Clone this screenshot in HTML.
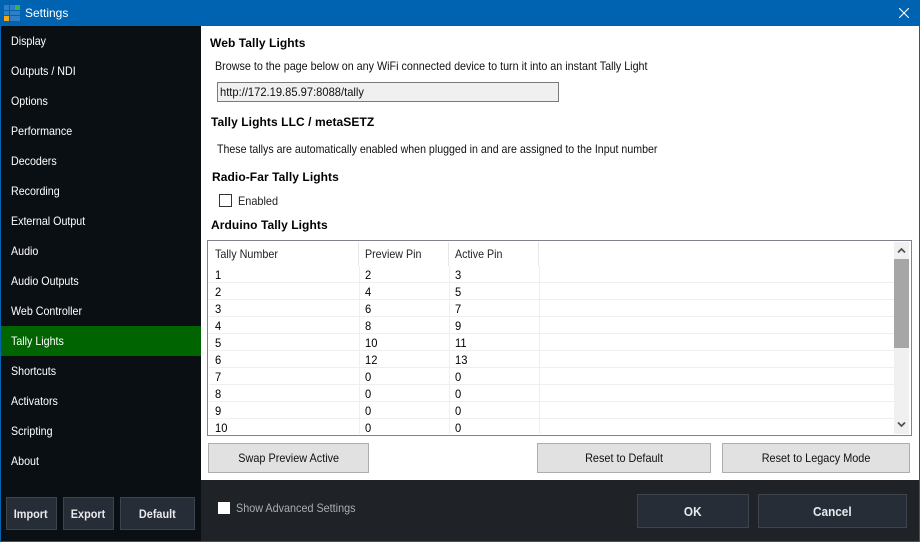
<!DOCTYPE html>
<html>
<head>
<meta charset="utf-8">
<style>
html,body{margin:0;padding:0}
body{width:920px;height:542px;position:relative;overflow:hidden;background:#0063b1;font-family:"Liberation Sans",sans-serif;font-size:12px;color:#000}
div{position:absolute;box-sizing:border-box}
.t{white-space:nowrap;line-height:14px;height:14px;transform:scaleX(.89);transform-origin:0 50%}
.n{color:#fff;left:11px}
.h{font-weight:bold;letter-spacing:.08px;font-size:12px;transform:none}
.b{background:#e1e1e1;border:1px solid #adadad;height:30px;line-height:28px;text-align:center;color:#111;white-space:nowrap}
.b span,.d span{display:inline-block;transform:scaleX(.905)}
.d{background:#262d36;border:1px solid #3c444e;color:#e8eaee;font-weight:bold;text-align:center;white-space:nowrap;font-size:12px}
.l{background:#efefef;height:1px;left:209px;width:685px}
.v{background:#efefef;width:1px;top:242px;height:192px}
.hv{background:#e6e6e6;width:1px;top:242px;height:24px}
.r{transform:scaleX(.93)}
</style>
</head>
<body>
<div style="left:1px;top:26px;width:200px;height:515px;background:#0a0f14"></div>
<div style="left:201px;top:26px;width:718px;height:454px;background:#fff"></div>
<div style="left:201px;top:480px;width:718px;height:61px;background:#1f2328"></div>

<!-- title -->
<div style="left:4px;top:5px;width:5px;height:5px;background:#2f7fc4"></div>
<div style="left:10px;top:5px;width:5px;height:5px;background:#2f7fc4"></div>
<div style="left:15px;top:5px;width:5px;height:5px;background:#3cb043"></div>
<div style="left:4px;top:11px;width:5px;height:4px;background:#2f7fc4"></div>
<div style="left:10px;top:11px;width:5px;height:4px;background:#2f7fc4"></div>
<div style="left:15px;top:11px;width:5px;height:4px;background:#2f7fc4"></div>
<div style="left:4px;top:16px;width:5px;height:5px;background:#f6a81c"></div>
<div style="left:10px;top:16px;width:5px;height:5px;background:#2f7fc4"></div>
<div style="left:15px;top:16px;width:5px;height:5px;background:#2f7fc4"></div>
<div class="t" style="left:25px;top:6px;color:#fff;transform:none">Settings</div>
<svg style="position:absolute;left:899px;top:8px" width="10" height="10" viewBox="0 0 10 10"><path d="M0 0l10 10M10 0L0 10" stroke="#fff" stroke-width="1.1" fill="none"/></svg>

<!-- sidebar -->
<div style="left:1px;top:326px;width:200px;height:30px;background:#006400"></div>
<div class="t n" style="top:34px">Display</div>
<div class="t n" style="top:64px">Outputs / NDI</div>
<div class="t n" style="top:94px">Options</div>
<div class="t n" style="top:124px">Performance</div>
<div class="t n" style="top:154px">Decoders</div>
<div class="t n" style="top:184px">Recording</div>
<div class="t n" style="top:214px">External Output</div>
<div class="t n" style="top:244px">Audio</div>
<div class="t n" style="top:274px">Audio Outputs</div>
<div class="t n" style="top:304px">Web Controller</div>
<div class="t n" style="top:334px">Tally Lights</div>
<div class="t n" style="top:364px">Shortcuts</div>
<div class="t n" style="top:394px">Activators</div>
<div class="t n" style="top:424px">Scripting</div>
<div class="t n" style="top:454px">About</div>

<div class="d" style="left:6px;top:497px;width:51px;height:33px;line-height:32px;padding-right:1px"><span>Import</span></div>
<div class="d" style="left:63px;top:497px;width:51px;height:33px;line-height:32px"><span>Export</span></div>
<div class="d" style="left:120px;top:497px;width:75px;height:33px;line-height:32px"><span>Default</span></div>

<!-- content -->
<div class="t h" style="left:210px;top:36px">Web Tally Lights</div>
<div class="t" style="left:215px;top:59px;color:#111;transform:scaleX(.896)">Browse to the page below on any WiFi connected device to turn it into an instant Tally Light</div>
<div style="left:217px;top:82px;width:342px;height:20px;background:#f0f0f0;border:1px solid #7a7a7a"></div>
<div class="t" style="left:220px;top:85px;color:#111;transform:scaleX(.93)">http://172.19.85.97:8088/tally</div>
<div class="t h" style="left:211px;top:115px">Tally Lights LLC / metaSETZ</div>
<div class="t" style="left:217px;top:142px;color:#111;transform:scaleX(.885)">These tallys are automatically enabled when plugged in and are assigned to the Input number</div>
<div class="t h" style="left:212px;top:170px">Radio-Far Tally Lights</div>
<div style="left:219px;top:194px;width:13px;height:13px;background:#fff;border:1px solid #333"></div>
<div class="t" style="left:238px;top:194px;color:#222;transform:scaleX(.91)">Enabled</div>
<div class="t h" style="left:211px;top:218px">Arduino Tally Lights</div>

<!-- table -->
<div style="left:207px;top:240px;width:705px;height:196px;border:1px solid #82828c;background:#fff"></div>
<div class="hv" style="left:358px"></div>
<div class="hv" style="left:448px"></div>
<div class="hv" style="left:538px"></div>
<div class="v" style="left:359px;top:266px;height:168px"></div>
<div class="v" style="left:449px;top:266px;height:168px"></div>
<div class="v" style="left:539px;top:266px;height:168px"></div>
<div class="l" style="top:282px"></div>
<div class="l" style="top:299px"></div>
<div class="l" style="top:316px"></div>
<div class="l" style="top:333px"></div>
<div class="l" style="top:350px"></div>
<div class="l" style="top:367px"></div>
<div class="l" style="top:384px"></div>
<div class="l" style="top:401px"></div>
<div class="l" style="top:418px"></div>

<div class="t" style="left:215px;top:247px;color:#222;transform:scaleX(.9)">Tally Number</div>
<div class="t" style="left:365px;top:247px;color:#222">Preview Pin</div>
<div class="t" style="left:455px;top:247px;color:#222">Active Pin</div>

<div class="t r" style="left:215px;top:268px">1</div><div class="t r" style="left:365px;top:268px">2</div><div class="t r" style="left:455px;top:268px">3</div>
<div class="t r" style="left:215px;top:285px">2</div><div class="t r" style="left:365px;top:285px">4</div><div class="t r" style="left:455px;top:285px">5</div>
<div class="t r" style="left:215px;top:302px">3</div><div class="t r" style="left:365px;top:302px">6</div><div class="t r" style="left:455px;top:302px">7</div>
<div class="t r" style="left:215px;top:319px">4</div><div class="t r" style="left:365px;top:319px">8</div><div class="t r" style="left:455px;top:319px">9</div>
<div class="t r" style="left:215px;top:336px">5</div><div class="t r" style="left:365px;top:336px">10</div><div class="t r" style="left:455px;top:336px">11</div>
<div class="t r" style="left:215px;top:353px">6</div><div class="t r" style="left:365px;top:353px">12</div><div class="t r" style="left:455px;top:353px">13</div>
<div class="t r" style="left:215px;top:370px">7</div><div class="t r" style="left:365px;top:370px">0</div><div class="t r" style="left:455px;top:370px">0</div>
<div class="t r" style="left:215px;top:387px">8</div><div class="t r" style="left:365px;top:387px">0</div><div class="t r" style="left:455px;top:387px">0</div>
<div class="t r" style="left:215px;top:404px">9</div><div class="t r" style="left:365px;top:404px">0</div><div class="t r" style="left:455px;top:404px">0</div>
<div class="t r" style="left:215px;top:421px">10</div><div class="t r" style="left:365px;top:421px">0</div><div class="t r" style="left:455px;top:421px">0</div>

<!-- scrollbar -->
<div style="left:894px;top:242px;width:15px;height:192px;background:#f0f0f0"></div>
<div style="left:894px;top:259px;width:15px;height:89px;background:#a6a6a6"></div>
<svg style="position:absolute;left:897px;top:247px" width="9" height="7" viewBox="0 0 9 7"><path d="M1 5.5l3.5-3.5 3.5 3.5" stroke="#505050" stroke-width="1.7" fill="none"/></svg>
<svg style="position:absolute;left:897px;top:421px" width="9" height="7" viewBox="0 0 9 7"><path d="M1 1.5l3.5 3.5 3.5-3.5" stroke="#505050" stroke-width="1.7" fill="none"/></svg>

<!-- buttons -->
<div class="b" style="left:208px;top:443px;width:161px"><span>Swap Preview Active</span></div>
<div class="b" style="left:537px;top:443px;width:174px"><span>Reset to Default</span></div>
<div class="b" style="left:722px;top:443px;width:188px"><span>Reset to Legacy Mode</span></div>

<!-- footer -->
<div style="left:218px;top:502px;width:12px;height:12px;background:#fff"></div>
<div class="t" style="left:236px;top:501px;color:#a9adb2;transform:scaleX(.9)">Show Advanced Settings</div>
<div class="d" style="left:637px;top:494px;width:112px;height:34px;line-height:33px;font-size:13px"><span>OK</span></div>
<div class="d" style="left:758px;top:494px;width:149px;height:34px;line-height:33px;font-size:13px"><span>Cancel</span></div>
</body>
</html>
